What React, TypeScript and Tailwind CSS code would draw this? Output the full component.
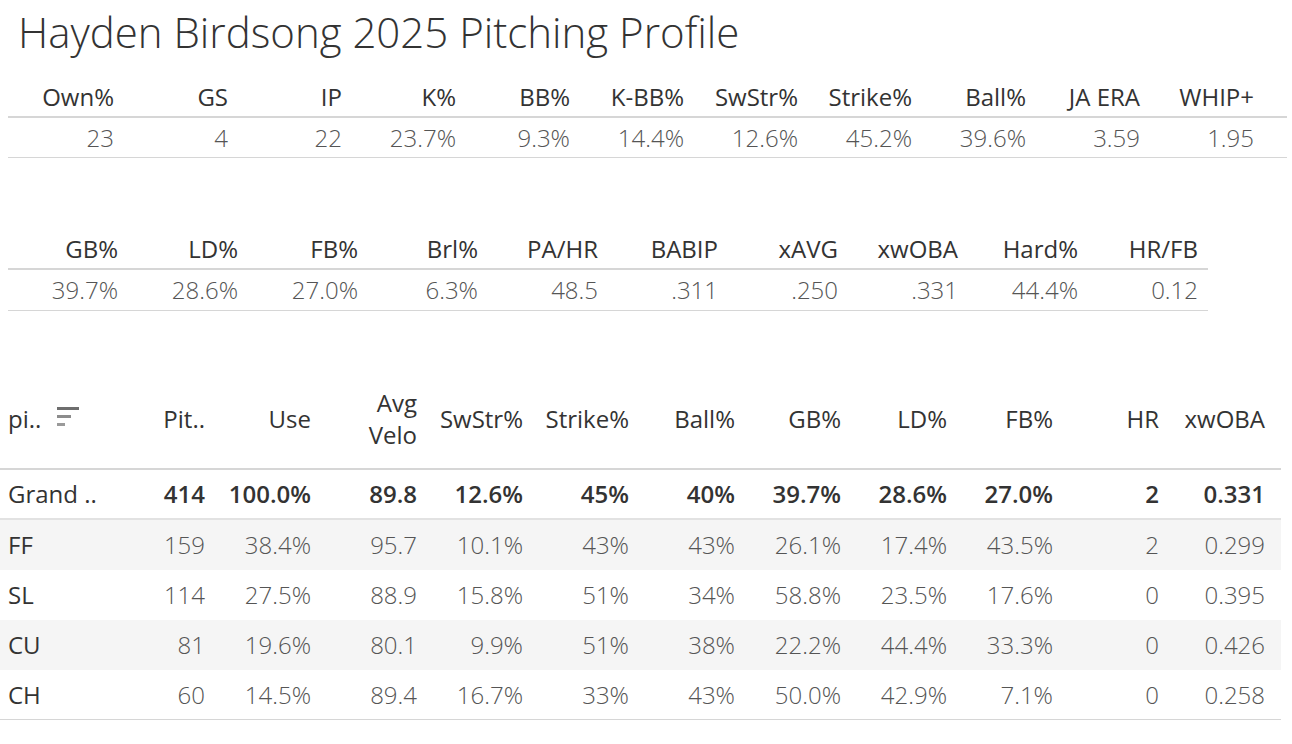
import React from "react";

const t1h = ["Own%", "GS", "IP", "K%", "BB%", "K-BB%", "SwStr%", "Strike%", "Ball%", "JA ERA", "WHIP+"];
const t1v = ["23", "4", "22", "23.7%", "9.3%", "14.4%", "12.6%", "45.2%", "39.6%", "3.59", "1.95"];
const t2h = ["GB%", "LD%", "FB%", "Brl%", "PA/HR", "BABIP", "xAVG", "xwOBA", "Hard%", "HR/FB"];
const t2v = ["39.7%", "28.6%", "27.0%", "6.3%", "48.5", ".311", ".250", ".331", "44.4%", "0.12"];

const t3h = ["Pit..", "Use", "AVG", "SwStr%", "Strike%", "Ball%", "GB%", "LD%", "FB%", "HR", "xwOBA"];
const grand = ["414", "100.0%", "89.8", "12.6%", "45%", "40%", "39.7%", "28.6%", "27.0%", "2", "0.331"];
const rows: { name: string; vals: string[] }[] = [
  { name: "FF", vals: ["159", "38.4%", "95.7", "10.1%", "43%", "43%", "26.1%", "17.4%", "43.5%", "2", "0.299"] },
  { name: "SL", vals: ["114", "27.5%", "88.9", "15.8%", "51%", "34%", "58.8%", "23.5%", "17.6%", "0", "0.395"] },
  { name: "CU", vals: ["81", "19.6%", "80.1", "9.9%", "51%", "38%", "22.2%", "44.4%", "33.3%", "0", "0.426"] },
  { name: "CH", vals: ["60", "14.5%", "89.4", "16.7%", "33%", "43%", "50.0%", "42.9%", "7.1%", "0", "0.258"] },
];

function SortIcon() {
  return (
    <svg width="22" height="20" viewBox="0 0 22 20" className="shrink-0">
      <rect x="0" y="0" width="22" height="3" fill="#6e6e6e" />
      <rect x="0" y="8" width="14" height="3" fill="#8c8c8c" />
      <rect x="0" y="16" width="8" height="3" fill="#9a9a9a" />
    </svg>
  );
}

export default function App() {
  return (
    <div className="w-[1292px] h-[744px] bg-white overflow-hidden font-['Open_Sans',sans-serif] text-[24px]">
      <div className="h-[78px] pl-[18px] pt-[9px] text-[42px] leading-[46px] font-light text-[#333]">
        Hayden Birdsong 2025 Pitching Profile
      </div>

      {/* Table 1 */}
      <div className="ml-2 w-[1279px]">
        <div className="grid grid-cols-[repeat(11,114px)] h-[40px] items-center border-b-2 border-[#d6d6d6] text-[#333] leading-none">
          {t1h.map((h) => (
            <div key={h} className="text-right pr-2">{h}</div>
          ))}
        </div>
        <div className="grid grid-cols-[repeat(11,114px)] h-[40px] items-center border-b border-[#d6d6d6] text-[#555] font-light leading-none">
          {t1v.map((v, i) => (
            <div key={i} className="text-right pr-2">{v}</div>
          ))}
        </div>
      </div>

      {/* Table 2 */}
      <div className="ml-2 mt-[72px] w-[1200px]">
        <div className="grid grid-cols-[repeat(10,120px)] h-[40px] items-center border-b-2 border-[#d6d6d6] text-[#333] leading-none">
          {t2h.map((h) => (
            <div key={h} className="text-right pr-[10px]">{h}</div>
          ))}
        </div>
        <div className="grid grid-cols-[repeat(10,120px)] h-[41px] items-center border-b border-[#d6d6d6] text-[#555] font-light leading-none">
          {t2v.map((v, i) => (
            <div key={i} className="text-right pr-[10px]">{v}</div>
          ))}
        </div>
      </div>

      {/* Table 3 */}
      <div className="mt-[72px] w-[1281px]">
        <div className="grid grid-cols-[107px_repeat(11,106px)] h-[87px] items-center pb-[13px] border-b-2 border-[#d6d6d6] text-[#333]">
          <div className="flex items-center pl-2 leading-none">
            <span>pi..</span>
            <span className="ml-4 -mt-1"><SortIcon /></span>
          </div>
          {t3h.map((h) =>
            h === "AVG" ? (
              <div key={h} className="text-right pr-2 leading-[32px]">
                Avg
                <br />
                Velo
              </div>
            ) : (
              <div key={h} className="text-right pr-2 leading-none">{h}</div>
            )
          )}
        </div>
        <div className="grid grid-cols-[107px_repeat(11,106px)] h-[50px] items-center border-b-2 border-[#e2e2e2] leading-none">
          <div className="pl-2 text-[#333]">Grand ..</div>
          {grand.map((v, i) => (
            <div key={i} className="text-right pr-2 font-semibold text-[#333]">{v}</div>
          ))}
        </div>
        {rows.map((r, idx) => (
          <div
            key={r.name}
            className={
              "grid grid-cols-[107px_repeat(11,106px)] h-[50px] items-center leading-none " +
              (idx % 2 === 0 ? "bg-[#f5f5f5]" : "bg-white") +
              (idx === rows.length - 1 ? " border-b border-[#d6d6d6]" : "")
            }
          >
            <div className="pl-2 text-[#333]">{r.name}</div>
            {r.vals.map((v, i) => (
              <div key={i} className="text-right pr-2 font-light text-[#555]">{v}</div>
            ))}
          </div>
        ))}
      </div>
    </div>
  );
}
